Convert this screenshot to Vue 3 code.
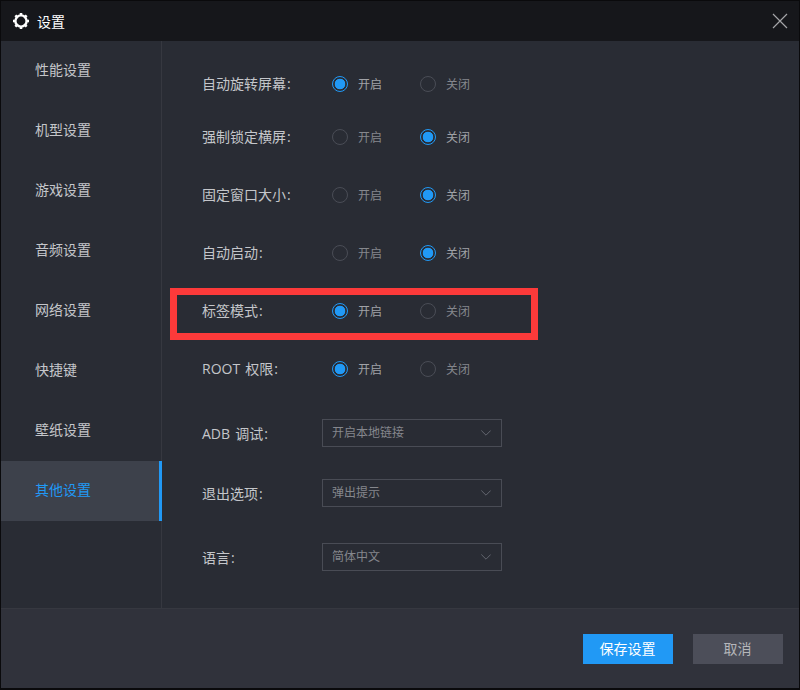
<script setup>
const menu = ['性能设置', '机型设置', '游戏设置', '音频设置', '网络设置', '快捷键', '壁纸设置', '其他设置']
const radios = [
  { label: '自动旋转屏幕', on: true },
  { label: '强制锁定横屏', on: false },
  { label: '固定窗口大小', on: false },
  { label: '自动启动', on: false },
  { label: '标签模式', on: true, mark: true },
  { label: 'ROOT 权限', on: true }
]
const selects = [
  { label: 'ADB 调试', value: '开启本地链接', cls: 's1' },
  { label: '退出选项', value: '弹出提示', cls: 's2' },
  { label: '语言', value: '简体中文', cls: 's3' }
]
const teeth = [0, 45, 90, 135, 180, 225, 270, 315]
</script>

<template>
  <div class="win">
    <header class="head">
      <svg class="gear" width="16" height="16" viewBox="0 0 16 16">
        <circle cx="8" cy="8" r="5.6" fill="none" stroke="#fff" stroke-width="2.4" />
        <rect v-for="t in teeth" :key="t" x="6.7" y="0" width="2.6" height="2.6" fill="#fff" :transform="`rotate(${t} 8 8)`" />
      </svg>
      <span class="title">设置</span>
      <svg class="close" width="16" height="16" viewBox="0 0 16 16">
        <path d="M1 1L15 15M15 1L1 15" stroke="#a4a5a8" stroke-width="1.2" fill="none" />
      </svg>
    </header>
    <div class="body">
      <nav class="side">
        <div v-for="(m, i) in menu" :key="m" class="item" :class="{ active: i === 7 }">{{ m }}</div>
      </nav>
      <main class="content">
        <div v-for="(r, i) in radios" :key="r.label" class="row" :class="{ first: i === 0 }">
          <span class="label">{{ r.label }}<span class="colon">:</span></span>
          <span class="opt">
            <i class="dot" :class="{ sel: r.on }"></i><span>开启</span>
          </span>
          <span class="opt">
            <i class="dot" :class="{ sel: !r.on }"></i><span>关闭</span>
          </span>
          <div v-if="r.mark" class="mark"></div>
        </div>
        <div v-for="s in selects" :key="s.label" class="srow" :class="s.cls">
          <span class="slabel">{{ s.label }}<span class="colon">:</span></span>
          <div class="select">
            <span class="val">{{ s.value }}</span>
            <svg width="10" height="6" viewBox="0 0 10 6">
              <path d="M0.3 0.5L5 5.2L9.7 0.5" stroke="#63666f" stroke-width="1" fill="none" />
            </svg>
          </div>
        </div>
      </main>
    </div>
    <footer class="foot">
      <button class="btn save">保存设置</button>
      <button class="btn cancel">取消</button>
    </footer>
  </div>
</template>

<style scoped>
.win {
  width: 800px;
  height: 690px;
  box-sizing: border-box;
  border: 1px solid #0a0a0c;
  border-bottom-width: 2px;
  background: #292c34;
  display: flex;
  flex-direction: column;
  font-family: "Open Sans", "Noto Sans CJK SC", "Liberation Sans", sans-serif;
  font-size: 14px;
  overflow: hidden;
}
.head {
  height: 40px;
  flex: none;
  background: #16171b;
  display: flex;
  align-items: center;
  padding-left: 12px;
}
.gear { margin-right: 8px; }
.title { color: #fff; font-size: 14px; }
.close { margin-left: auto; margin-right: 11px; margin-top: -1px; }
.body {
  flex: 1;
  display: flex;
  min-height: 0;
}
.side {
  width: 160px;
  flex: none;
  border-right: 1px solid #363840;
}
.item {
  height: 60px;
  line-height: 58px;
  padding-left: 34px;
  color: #c4c6ca;
  font-size: 14px;
}
.item.active {
  background: #3d414b;
  color: #2199f5;
  box-shadow: inset -3px 0 0 #2199f5;
  margin-right: -1px;
}
.content {
  flex: 1;
  padding-left: 40px;
}
.row {
  position: relative;
  height: 58px;
  display: flex;
  align-items: center;
  color: #c4c6ca;
}
.row.first { margin-top: 14px; margin-bottom: -5px; }
.label { width: 130px; padding-bottom: 2px; word-spacing: 1.5px; }
.colon { margin-left: 1px; }
.opt {
  width: 88px;
  display: flex;
  align-items: center;
  color: #85878d;
  font-size: 12px;
}
.dot {
  box-sizing: border-box;
  width: 16px;
  height: 16px;
  border-radius: 50%;
  border: 1px solid #4a4d56;
  margin-right: 10px;
  flex: none;
}
.dot.sel {
  border-color: #2199f5;
  background: radial-gradient(circle, #2199f5 0 5px, transparent 5.6px);
}
.opt:has(.sel) { color: #a0a2a7; }
.mark {
  position: absolute;
  left: -32px;
  top: 6px;
  width: 368px;
  height: 52px;
  box-sizing: border-box;
  border: 7px solid #fc3a3a;
  pointer-events: none;
}
.srow {
  display: flex;
  align-items: center;
  color: #c4c6ca;
  height: 28px;
}
.s1 { margin-top: 21px; }
.s2 { margin-top: 32px; }
.s3 { margin-top: 36px; }
.slabel { width: 120px; padding-bottom: 1px; word-spacing: 1.5px; }
.select {
  box-sizing: border-box;
  width: 180px;
  height: 28px;
  border: 1px solid #494c55;
  padding: 0 10px 0 9px;
  display: flex;
  align-items: center;
  justify-content: space-between;
  color: #85878d;
  font-size: 12px;
}
.val { padding-bottom: 2px; }
.foot {
  height: 80px;
  flex: none;
  background: #30323b;
  border-top: 1px solid #363840;
  display: flex;
  justify-content: flex-end;
  gap: 20px;
  padding: 25px 16px 0 0;
  box-sizing: border-box;
}
.btn {
  width: 90px;
  height: 30px;
  border: 0;
  font-family: inherit;
  font-size: 14px;
  padding: 0 1px 2px 0;
}
.save { background: #2199f5; color: #fff; }
.cancel { background: #4c4e59; color: #b5b6ba; }
</style>
